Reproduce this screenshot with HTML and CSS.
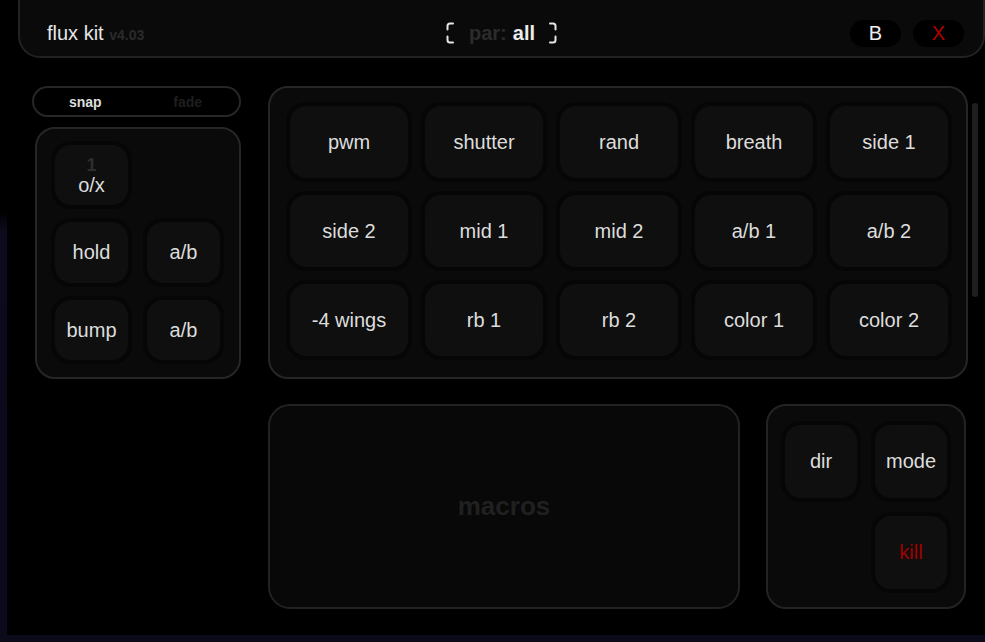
FILE: index.html
```html
<!DOCTYPE html>
<html lang="en">
<head>
    <meta charset="UTF-8">
    <title>flux kit</title>
    <link rel="stylesheet" href="styles.css">
</head>
<body>
<div class="app">
    <header class="topbar">
        <div class="brand">flux kit <span class="version">v4.03</span></div>
        <div class="par">
            <svg class="bracket" width="8" height="22" viewBox="0 0 8 22">
                <path d="M7 1.5H4Q1.5 1.5 1.5 4V7.5M1.5 14.5V18Q1.5 20.5 4 20.5H7" fill="none" stroke="#e6e6e6" stroke-width="2" stroke-linecap="round"/>
            </svg>
            <span class="par-label">par:</span>
            <span class="par-value">all</span>
            <svg class="bracket" width="8" height="22" viewBox="0 0 8 22">
                <path d="M1 1.5H4Q6.5 1.5 6.5 4V7.5M6.5 14.5V18Q6.5 20.5 4 20.5H1" fill="none" stroke="#e6e6e6" stroke-width="2" stroke-linecap="round"/>
            </svg>
        </div>
        <div class="top-actions">
            <button class="pill">B</button>
            <button class="pill close">X</button>
        </div>
    </header>

    <div class="main">
        <div class="side">
            <div class="toggle">
                <span class="on">snap</span>
                <span class="off">fade</span>
            </div>
            <div class="side-box">
                <button class="pad stacked"><span class="num">1</span>o/x</button>
                <span></span>
                <button class="pad">hold</button>
                <button class="pad">a/b</button>
                <button class="pad">bump</button>
                <button class="pad">a/b</button>
            </div>
        </div>

        <div class="content">
            <div class="top-row">
                <div class="fx-grid">
                    <button class="pad">pwm</button>
                    <button class="pad">shutter</button>
                    <button class="pad">rand</button>
                    <button class="pad">breath</button>
                    <button class="pad">side 1</button>
                    <button class="pad">side 2</button>
                    <button class="pad">mid 1</button>
                    <button class="pad">mid 2</button>
                    <button class="pad">a/b 1</button>
                    <button class="pad">a/b 2</button>
                    <button class="pad">-4 wings</button>
                    <button class="pad">rb 1</button>
                    <button class="pad">rb 2</button>
                    <button class="pad">color 1</button>
                    <button class="pad">color 2</button>
                </div>
                <div class="scroll-thumb"></div>
            </div>

            <div class="bottom-row">
                <div class="macros">macros</div>
                <div class="ctrl-box">
                    <button class="pad">dir</button>
                    <button class="pad">mode</button>
                    <span></span>
                    <button class="pad kill">kill</button>
                </div>
            </div>
        </div>
    </div>
</div>
</body>
</html>
```

FILE: styles.css
```css
body {
    margin: 0;
    font-family: 'Liberation Sans', Arial, sans-serif;
    background: linear-gradient(to bottom, #000 210px, #0c0a1c 230px, #0b0a1a 100%);
    overflow: hidden;
}
.app {
    background-color: #000;
    margin: 0 0 7px 7px;
    height: 635px;
    overflow: hidden;
}
button {
    font-family: inherit;
    border: none;
    cursor: pointer;
    padding: 0;
}

/* top bar */
.topbar {
    margin: -12px 0 0 11px;
    height: 70px;
    box-sizing: border-box;
    padding: 20px 19px 0 19px;
    border: 2px solid #222;
    border-radius: 0 0 22px 22px;
    background-color: #0a0a0a;
    display: grid;
    grid-template-columns: 1fr auto 1fr;
    align-items: center;
}
.brand {
    padding-left: 8px;
    font-size: 20px;
    color: #e6e6e6;
}
.version {
    font-size: 14px;
    font-weight: bold;
    color: #2a2a2a;
}
.par {
    display: flex;
    align-items: center;
    font-size: 20px;
    font-weight: bold;
}
.bracket {
    display: block;
}
.par-label {
    color: #2b2b2b;
    margin-left: 15px;
}
.par-value {
    color: #ececec;
    margin: 0 14px 0 6px;
}
.top-actions {
    display: flex;
    justify-content: flex-end;
    gap: 12px;
}
.pill {
    width: 51px;
    height: 27px;
    border-radius: 14px;
    background-color: #000;
    color: #eee;
    font-size: 20px;
}
.pill.close {
    color: #b00000;
}

/* layout */
.main {
    display: flex;
    padding: 28px 0 0 25px;
    gap: 27px;
}
.side {
    width: 209px;
}
.toggle {
    height: 31px;
    box-sizing: border-box;
    border: 2px solid #262626;
    border-radius: 16px;
    display: flex;
    align-items: center;
    font-size: 14px;
    font-weight: bold;
}
.toggle span {
    flex: 1;
    text-align: center;
}
.toggle .on {
    color: #dedede;
}
.toggle .off {
    color: #1e1e1e;
}
.side-box {
    margin: 10px 0 0 3px;
    height: 252px;
    box-sizing: border-box;
    border: 2px solid #262626;
    border-radius: 20px;
    background-color: #0a0a0a;
    padding: 16px 0 0 18px;
    display: grid;
    grid-template-columns: 73px 73px;
    grid-template-rows: 60px 61px 60px;
    gap: 17px 19px;
}

.pad {
    background-color: #0f0f0f;
    color: #dddddd;
    font-size: 20px;
    border-radius: 16px;
    box-shadow: 0 0 0 4px #060606;
}
.pad.stacked {
    display: flex;
    flex-direction: column;
    align-items: center;
    justify-content: center;
    line-height: 23px;
    padding-top: 2px;
}
.pad .num {
    color: #2e2e2e;
    font-weight: bold;
    font-size: 18px;
    line-height: 18px;
}
.pad.kill {
    color: #a00000;
}

.top-row {
    display: flex;
    gap: 4px;
}
.fx-grid {
    width: 700px;
    height: 293px;
    box-sizing: border-box;
    border: 2px solid #262626;
    border-radius: 20px;
    background-color: #0a0a0a;
    padding: 18px 18px 0 20px;
    display: grid;
    grid-template-columns: repeat(5, 118px);
    grid-template-rows: repeat(3, 72px);
    gap: 17px 17px;
}
.scroll-thumb {
    width: 6px;
    height: 194px;
    margin-top: 17px;
    border-radius: 3px;
    background-color: #1e1e1e;
}

.bottom-row {
    display: flex;
    gap: 26px;
    margin-top: 25px;
}
.macros {
    width: 472px;
    height: 205px;
    box-sizing: border-box;
    border: 2px solid #222;
    border-radius: 22px;
    background-color: #080808;
    display: flex;
    align-items: center;
    justify-content: center;
    font-size: 26px;
    font-weight: bold;
    color: #202020;
}
.ctrl-box {
    width: 200px;
    height: 205px;
    box-sizing: border-box;
    border: 2px solid #232323;
    border-radius: 20px;
    background-color: #0a0a0a;
    padding: 19px 0 0 17px;
    display: grid;
    grid-template-columns: 72px 72px;
    grid-template-rows: 73px 73px;
    gap: 18px 18px;
}
```
